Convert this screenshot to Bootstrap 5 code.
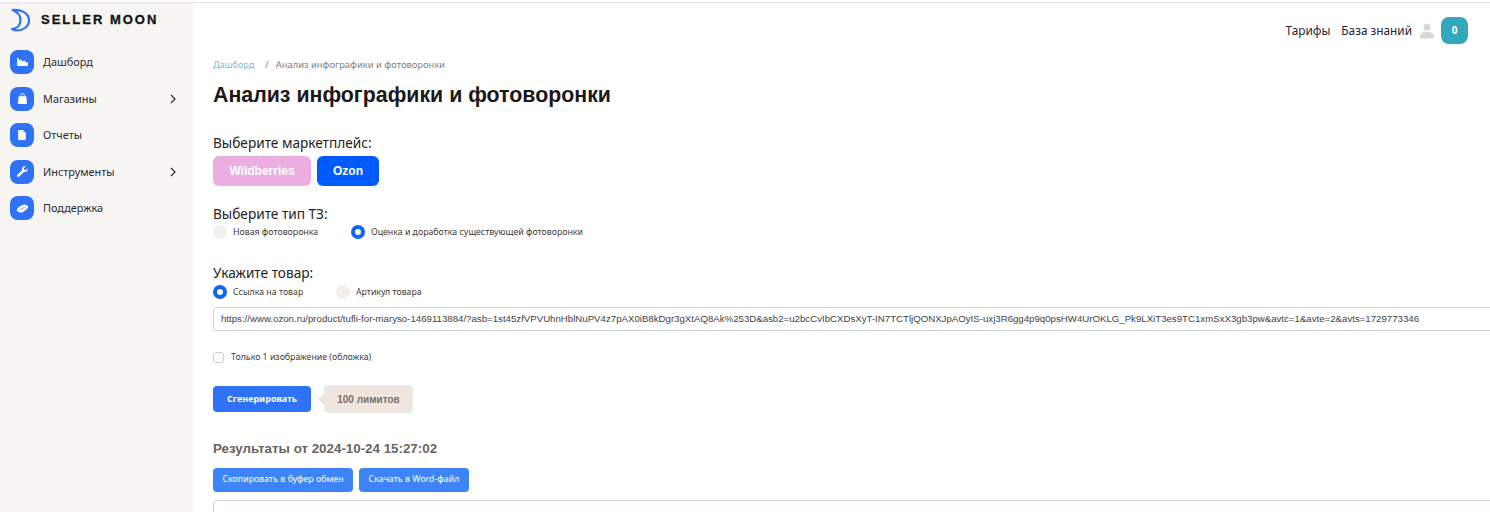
<!DOCTYPE html>
<html lang="ru">
<head>
<meta charset="utf-8">
<title>Анализ инфографики и фотоворонки</title>
<link rel="stylesheet" href="https://cdn.jsdelivr.net/npm/bootstrap@5.3.0/dist/css/bootstrap.min.css">
<style>
html,body{height:512px;overflow:hidden}
body{font-family:"Noto Sans",sans-serif;color:#1c1a18;background:#fff}
.shell{height:510px;margin-top:2px;border-top:1px solid #e4e4e4;overflow:hidden}
.side{width:193px;flex:none;background:#f6f5f2;height:509px}
.brand{height:33px;padding-left:9px;gap:10px}
.brand-text{font-family:"Liberation Sans",sans-serif;font-weight:700;font-size:13px;letter-spacing:2px;color:#16161a;line-height:1;-webkit-text-stroke:.35px #16161a}
.menu{padding:0 0 0 10px;margin:7.8px 0 0;list-style:none}
.menu li{height:36.6px;padding-right:17px;font-size:10.9px;color:#2b2a33}
.ic{width:24px;height:24px;border-radius:8px;background:#2f72f6;flex:none;margin-right:9px}
.content{width:1297px;flex:none;padding:0 0 0 20px;position:relative}
.top{height:55px;padding-right:22px;font-size:11.8px;color:#2b2433}
.know{margin-left:11px;margin-right:8px}
.counter{width:27px;height:27px;background:#33a8ba;border-radius:8px;color:#fff;font-size:10px;font-weight:700;margin-left:7px}
.crumbs{font-size:9.4px;color:#86817b;height:14px;line-height:14px;margin:0}
.crumbs a{color:#71c2d8;text-decoration:none;font-size:9px}
.crumbs .sep{margin:0 7px 0 11px}
.ttl{font-family:"Liberation Sans",sans-serif;font-weight:700;font-size:21.35px;line-height:24px;margin:11px 0 0;color:#1b1917}
.lbl{font-size:13.65px;line-height:18px;color:#262320;margin:0}
.mp{height:30px;border:0;border-radius:6px;color:#fff;font-family:"Liberation Sans",sans-serif;font-weight:700;font-size:12px;padding:0}
.mp-wb{width:98px;background:#ecaee1}
.mp-oz{width:62px;background:#005bff}
.mp-oz:hover,.mp-wb:hover{color:#fff}
.mps{gap:6px;margin-top:4px}
.opt{font-size:8.78px;color:#3f3b38;line-height:14px}
.dot{width:14px;height:14px;border-radius:50%;background:#f3efe8;flex:none;margin-right:6px}
.dot.on{background:#fff;border:4px solid #0f66f0}
.w1{width:118px}
.w2{width:103px}
.url{height:24px;width:1290px;border:1px solid #ccd0d8;border-radius:3px;font-family:"Liberation Sans",sans-serif;font-size:9.67px;color:#45423f;padding:0 7px;line-height:22px;white-space:nowrap;overflow:hidden;background:#fff;margin-top:8px}
.chk{width:11px;height:11px;border:1px solid #c5cbe0;border-radius:3px;flex:none;margin-right:7px;background:#fff}
.gen{width:98px;height:26px;background:#2f72f6;border:0;border-radius:4px;color:#fff;font-size:9px;font-weight:700;padding:0}
.gen:hover{color:#fff;background:#2f72f6}
.lim{height:28px;width:89px;background:#efe7df;border-radius:4px;color:#7a7068;font-family:"Liberation Sans",sans-serif;font-weight:700;font-size:10px;position:relative;margin-left:13px}
.lim::before{content:"";position:absolute;left:-6px;top:8px;border-style:solid;border-width:6px 6px 6px 0;border-color:transparent #efe7df transparent transparent}
.res{font-family:"Liberation Sans",sans-serif;font-weight:700;font-size:13.35px;line-height:18px;color:#6a6460;margin:27px 0 0}
.acts{margin-top:10px;gap:6px}
.act{height:24px;background:#3d84f6;border:0;border-radius:4px;color:#fff;font-size:8.85px;padding:0}
.act:hover{background:#3d84f6;color:#fff}
.a1{width:140px}.a2{width:110px}
.resbox{height:40px;width:1290px;border:1px solid #c9d0dc;border-radius:4px;margin-top:8px}
.m1{margin-top:27px}.m2{margin-top:19px}.m3{margin-top:25px}.m4{margin-top:2px}.m5{margin-top:3px}.m6{margin-top:19px}.m7{margin-top:21px}
</style>
</head>
<body>
<div class="shell d-flex">
  <aside class="side">
    <div class="brand d-flex align-items-center">
      <svg width="22" height="24" viewBox="0 0 22 24" fill="none"><path d="M3.500 2C11 1.500 20 4 20 12.500 C20 18.500 14 22.500 8 22.500 C6 22.500 4.500 22 3 21 C8 20.500 11.500 17 11.500 12 C11.500 7.500 8.500 4 3.500 2 Z" stroke="#2f72f6" stroke-width="2.200" stroke-linejoin="round"/></svg>
      <span class="brand-text">SELLER MOON</span>
    </div>
    <ul class="menu">
      <li class="d-flex align-items-center"><span class="ic d-flex align-items-center justify-content-center"><svg width="11" height="8" viewBox="0 0 12 9"><path d="M0 9V0h1.800v3L4 1.500 6 4l2-1.500L10 5l2-.5V9z" fill="#fff"/></svg></span>Дашборд</li>
      <li class="d-flex align-items-center"><span class="ic d-flex align-items-center justify-content-center"><svg width="9" height="11" viewBox="0 0 10 12"><path d="M.8 3.500h8.400l.8 7.300a1 1 0 0 1-1 1.200H1a1 1 0 0 1-1-1.200z" fill="#fff"/><path d="M3 4.500V2.500a2 2 0 0 1 4 0v2" fill="none" stroke="#fff"/></svg></span>Магазины<svg class="ms-auto" width="6" height="10" viewBox="0 0 6 10"><path d="M1 1l4 4-4 4" fill="none" stroke="#333" stroke-width="1.300"/></svg></li>
      <li class="d-flex align-items-center"><span class="ic d-flex align-items-center justify-content-center"><svg width="8" height="10" viewBox="0 0 10 13"><path d="M0 1a1 1 0 0 1 1-1h5l4 4v8a1 1 0 0 1-1 1H1a1 1 0 0 1-1-1z" fill="#fff"/><path d="M6 0v4h4" fill="#cfe0fd"/></svg></span>Отчеты</li>
      <li class="d-flex align-items-center"><span class="ic d-flex align-items-center justify-content-center"><svg width="11" height="11" viewBox="0 0 12 12"><path d="M11.500 2.500L9.500 4.500 7.800 4.200 7.500 2.500 9.500.5C7.500-.2 5.300 1 5.300 3.200c0 .5.100 1 .2 1.300L.5 9.500a1.400 1.400 0 0 0 2 2l5-5c2.400.8 5-1.300 4-4z" fill="#fff"/></svg></span>Инструменты<svg class="ms-auto" width="6" height="10" viewBox="0 0 6 10"><path d="M1 1l4 4-4 4" fill="none" stroke="#333" stroke-width="1.300"/></svg></li>
      <li class="d-flex align-items-center"><span class="ic d-flex align-items-center justify-content-center"><svg width="13" height="9" viewBox="0 0 15 11"><path d="M.5 6.500L4 3l3-1.500L10 0.500l4.500 2-.5 2.500-3 2.500-3 2.500-4 .5-3-2z" fill="#fff"/><path d="M4 6.500c1.500.5 2.500 0 3.500-1.500l3-.5" fill="none" stroke="#2f72f6" stroke-width=".9"/></svg></span>Поддержка</li>
    </ul>
  </aside>
  <main class="content">
    <div class="top d-flex justify-content-end align-items-center">
      <span>Тарифы</span>
      <span class="know">База знаний</span>
      <svg width="14" height="16" viewBox="0 0 15 16"><circle cx="7.500" cy="4" r="3.800" fill="#d9d7d5"/><path d="M0 16v-2.500C0 10.500 3 9 7.500 9S15 10.500 15 13.500V16z" fill="#d9d7d5"/></svg>
      <span class="counter d-flex align-items-center justify-content-center">0</span>
    </div>
    <p class="crumbs"><a href="#">Дашборд</a><span class="sep">/</span>Анализ инфографики и фотоворонки</p>
    <h1 class="ttl">Анализ инфографики и фотоворонки</h1>

    <p class="lbl m1">Выберите маркетплейс:</p>
    <div class="d-flex mps"><button class="btn mp mp-wb">Wildberries</button><button class="btn mp mp-oz">Ozon</button></div>

    <p class="lbl m2">Выберите тип ТЗ:</p>
    <div class="opt d-flex align-items-center m4">
      <span class="dot"></span><span class="w1">Новая фотоворонка</span>
      <span class="dot on"></span><span>Оценка и доработка существующей фотоворонки</span>
    </div>

    <p class="lbl m3">Укажите товар:</p>
    <div class="opt d-flex align-items-center m5">
      <span class="dot on"></span><span class="w2">Ссылка на товар</span>
      <span class="dot"></span><span>Артикул товара</span>
    </div>
    <div class="url">https://www.ozon.ru/product/tufli-for-maryso-1469113884/?asb=1st45zfVPVUhnHblNuPV4z7pAX0iB8kDgr3gXtAQ8Ak%253D&amp;asb2=u2bcCvIbCXDsXyT-IN7TCTljQONXJpAOyIS-uxj3R6gg4p9q0psHW4UrOKLG_Pk9LXiT3es9TC1xmSxX3gb3pw&amp;avtc=1&amp;avte=2&amp;avts=1729773346</div>

    <div class="opt d-flex align-items-center m6">
      <span class="chk"></span><span>Только 1 изображение (обложка)</span>
    </div>

    <div class="d-flex align-items-center m7">
      <button class="btn gen">Сгенерировать</button>
      <span class="lim d-flex align-items-center justify-content-center">100 лимитов</span>
    </div>

    <p class="res">Результаты от 2024-10-24 15:27:02</p>
    <div class="d-flex acts">
      <button class="btn act a1">Скопировать в буфер обмен</button>
      <button class="btn act a2">Скачать в Word-файл</button>
    </div>
    <div class="resbox"></div>
  </main>
</div>
<script src="https://cdn.jsdelivr.net/npm/bootstrap@5.3.0/dist/js/bootstrap.bundle.min.js"></script>
</body>
</html>
